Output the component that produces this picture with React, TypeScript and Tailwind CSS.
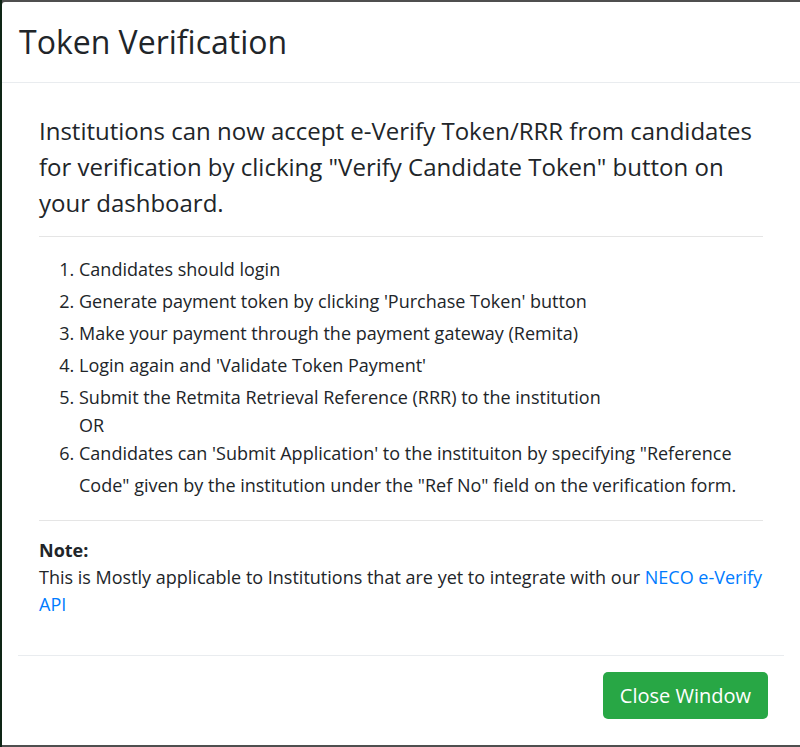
const steps = [
  "Candidates should login",
  "Generate payment token by clicking 'Purchase Token' button",
  "Make your payment through the payment gateway (Remita)",
  "Login again and 'Validate Token Payment'",
];

export default function App() {
  return (
    <div
      className="flex h-[747px] w-[800px] bg-[#4f4f4f] pt-[2px] pb-[2px]"
      style={{ fontFamily: '"Open Sans", "Liberation Sans", sans-serif' }}
    >
      <div className="-mt-[2px] -mb-[2px] w-[2px] shrink-0 bg-[#0e2515]" />
      <div className="flex flex-1 flex-col rounded-tl-[3px] bg-white text-[#212529]">
        {/* header */}
        <div className="flex h-[81px] items-center border-b border-[#e9ecef] px-[17px]">
          <h4 className="text-[32px] leading-[48px] font-normal">Token Verification</h4>
        </div>

        {/* body */}
        <div className="px-[37px] pt-[30px]">
          <p className="text-[24px] leading-[36px]">
            Institutions can now accept e-Verify Token/RRR from candidates for verification by
            clicking "Verify Candidate Token" button on your dashboard.
          </p>
          <hr className="mt-[15px] border-t border-[#e5e5e5]" />

          <ol className="mt-[16px] list-decimal pl-[40px] text-[18px]">
            {steps.map((s) => (
              <li key={s} className="leading-[32px]">
                {s}
              </li>
            ))}
            <li className="leading-[32px]">
              Submit the Retmita Retrieval Reference (RRR) to the institution
              <span className="block leading-[24px]">OR</span>
            </li>
            <li className="leading-[32px]">
              Candidates can 'Submit Application' to the instituiton by specifying "Reference
              Code" given by the institution under the "Ref No" field on the verification form.
            </li>
          </ol>
          <hr className="mt-[19px] border-t border-[#e5e5e5]" />

          <div className="mt-[16px] text-[18px] leading-[27px]">
            <p className="font-bold">Note:</p>
            <p>
              This is Mostly applicable to Institutions that are yet to integrate with our{" "}
              <a href="#" className="text-[#007bff]">
                NECO e-Verify API
              </a>
            </p>
          </div>
        </div>

        {/* footer */}
        <div className="mx-[16px] mt-[37px] flex flex-1 justify-end border-t border-[#e9ecef] pt-[16px] pr-[16px]">
          <button className="h-[47px] rounded-[5px] bg-[#28a745] px-[17px] text-[20px] leading-[30px] text-white">
            Close Window
          </button>
        </div>
      </div>
    </div>
  );
}
